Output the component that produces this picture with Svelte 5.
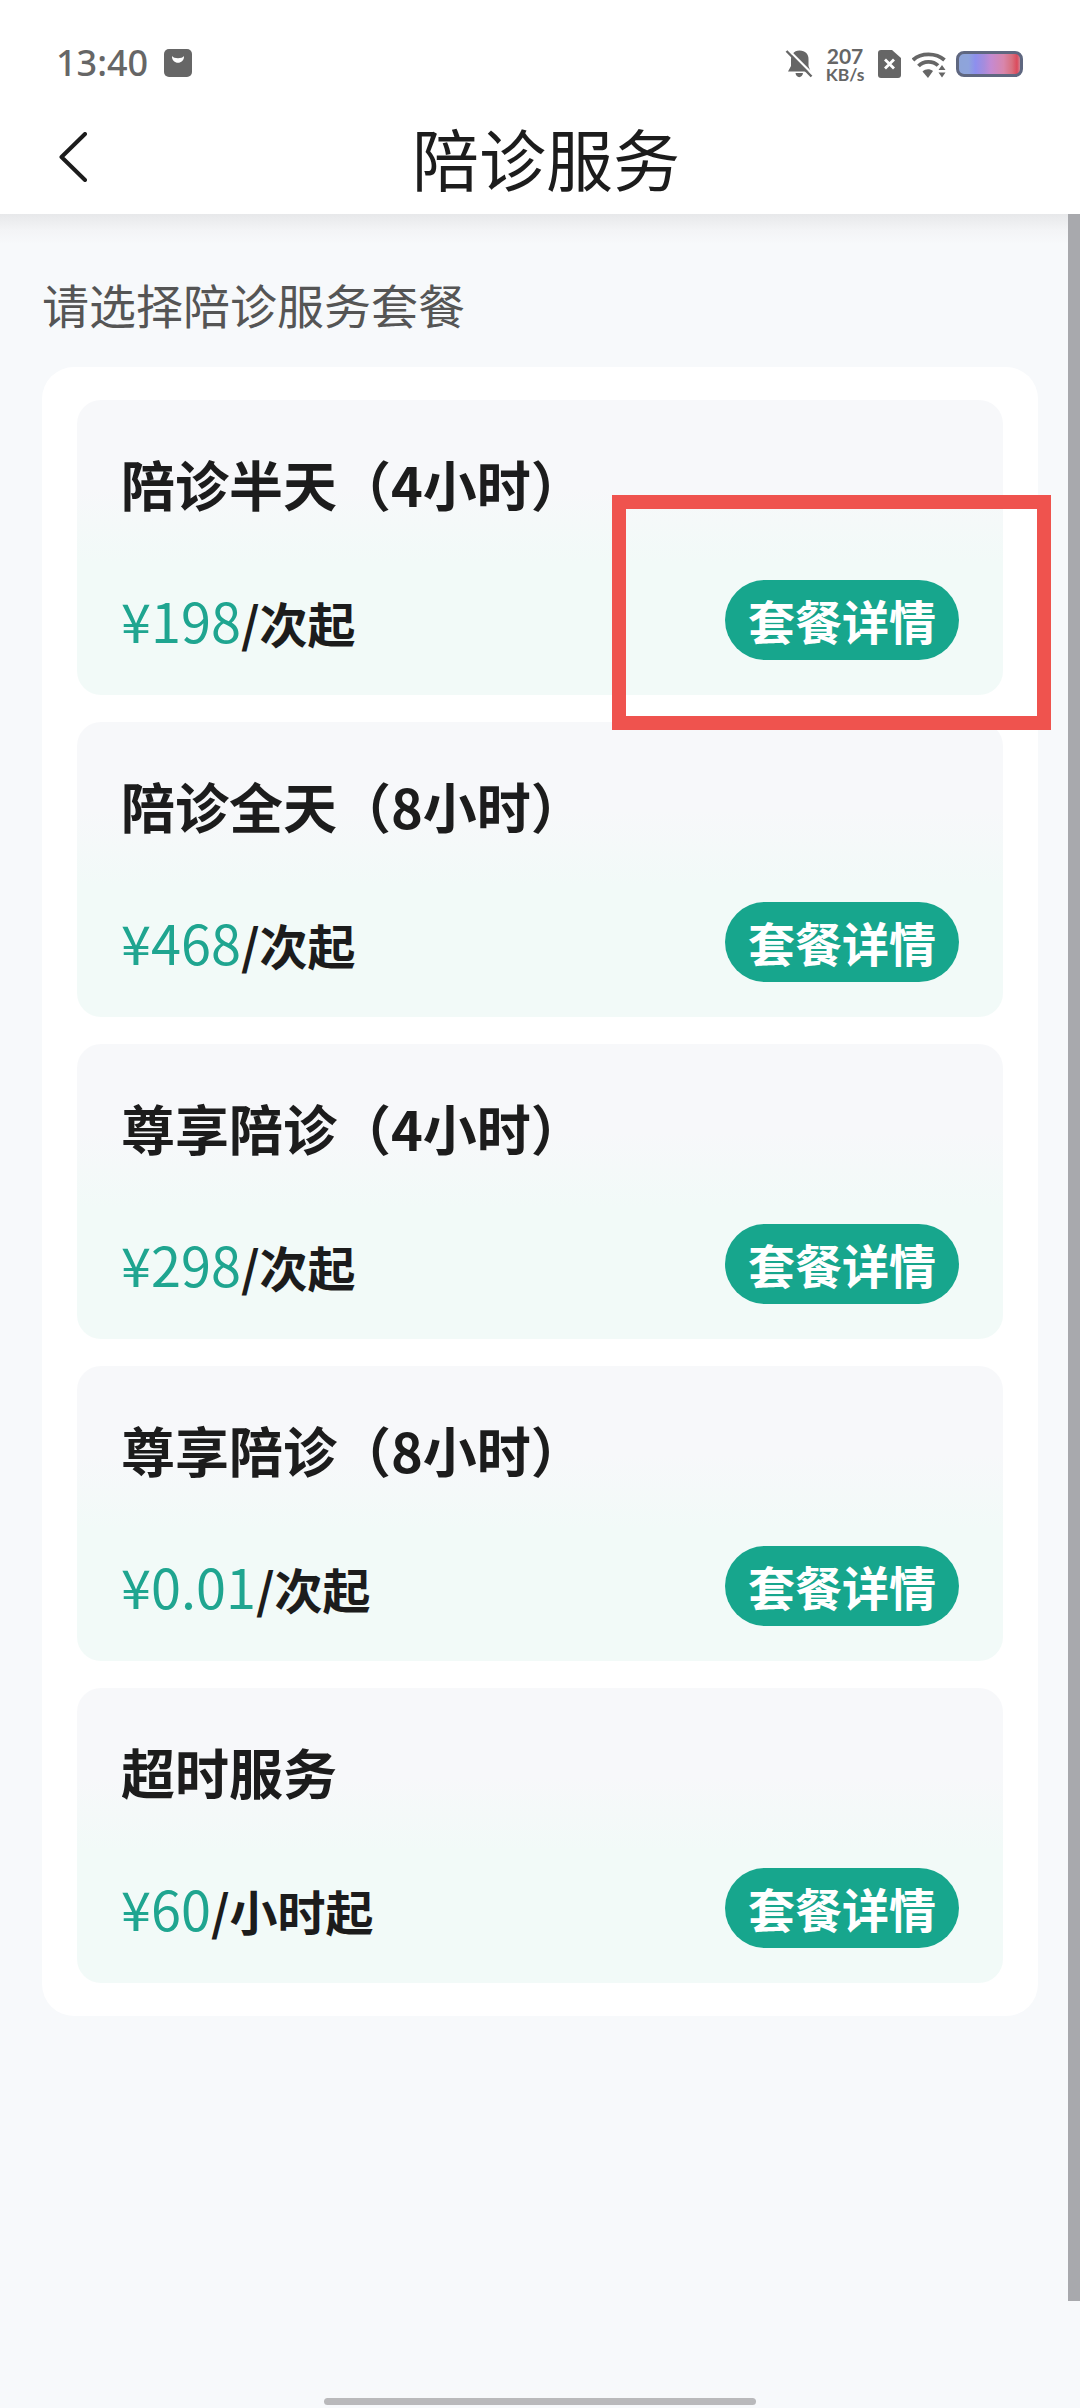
<script lang="ts">
    const plans = [
        { name: "陪诊半天（4小时）", price: "¥198", unit: "/次起" },
        { name: "陪诊全天（8小时）", price: "¥468", unit: "/次起" },
        { name: "尊享陪诊（4小时）", price: "¥298", unit: "/次起" },
        { name: "尊享陪诊（8小时）", price: "¥0.01", unit: "/次起" },
        { name: "超时服务", price: "¥60", unit: "/小时起" }
    ];
</script>

<div class="page">
    <header class="top">
        <div class="status">
            <div class="status-left">
                <span class="time">13:40</span>
                <svg class="bag" viewBox="0 0 28 28">
                    <rect width="28" height="28" rx="5" fill="#666" />
                    <path d="M8 7 C10 10 18 10 20 7 C20.5 16 7.5 16 8 7 Z" fill="#fff" />
                </svg>
            </div>
            <div class="status-right">
                <svg class="bell" viewBox="0 0 26 28">
                    <path d="M13.5 0.5 C7.5 0.5 5 5 5 10 L5 16 L2 21.5 L24.5 21.5 L22.5 16 L22.5 9 C22.5 4.5 19.5 0.5 13.5 0.5 Z M9.5 23 C10 28.5 16.5 28.5 17 23 Z" fill="#666" />
                    <path d="M1.5 -1 L27 24.5" stroke="#fff" stroke-width="2.4" />
                    <path d="M0.5 1 L25.5 26.5" stroke="#666" stroke-width="2.4" />
                </svg>
                <div class="speed">
                    <span class="speed-num">207</span>
                    <span class="speed-unit">KB/s</span>
                </div>
                <svg class="sim" viewBox="0 0 23 28">
                    <path d="M3 0 H14 L23 8 V25 Q23 28 20 28 H3 Q0 28 0 25 V3 Q0 0 3 0 Z" fill="#666" />
                    <path d="M7 9.5 L16 18.5 M16 9.5 L7 18.5" stroke="#fff" stroke-width="2.8" />
                </svg>
                <svg class="wifi" viewBox="0 0 34 27">
                    <path d="M1 9 C9 1.5 24 1.5 32.5 9" fill="none" stroke="#666" stroke-width="3.8" />
                    <path d="M6.5 15 C11.5 9.5 21 9.5 26 14.5" fill="none" stroke="#666" stroke-width="3.8" />
                    <path d="M10.5 20.5 C13.5 17.5 18 17.5 21 20 L16 27 Z" fill="#666" />
                    <path d="M30 14 L33.5 19 H26.5 Z M26.5 21.5 H33.5 L30 26.5 Z" fill="#666" />
                </svg>
                <svg class="battery" viewBox="0 0 67 26">
                    <defs>
                        <linearGradient id="charge" x1="0" x2="1" y1="0" y2="0">
                            <stop offset="0" stop-color="#8ea4d8" />
                            <stop offset="0.17" stop-color="#8ea4dc" />
                            <stop offset="0.28" stop-color="#8d8fee" />
                            <stop offset="0.42" stop-color="#a78cdc" />
                            <stop offset="0.52" stop-color="#c48ad2" />
                            <stop offset="0.72" stop-color="#d886ac" />
                            <stop offset="0.85" stop-color="#d8707f" />
                            <stop offset="0.93" stop-color="#dc4a5c" />
                            <stop offset="1" stop-color="#c9a0b0" />
                        </linearGradient>
                    </defs>
                    <rect x="1.5" y="1.5" width="64" height="23" rx="6.5" fill="url(#charge)" stroke="#5f6780" stroke-width="3" />
                </svg>
            </div>
        </div>
        <nav class="nav">
            <svg class="back" viewBox="0 0 28 50">
                <path d="M26 2 L2.5 25 L26 48" fill="none" stroke="#1c1c1c" stroke-width="4" stroke-linecap="round" stroke-linejoin="round" />
            </svg>
            <h1 class="title">陪诊服务</h1>
        </nav>
    </header>

    <main class="content">
        <div class="hint">请选择陪诊服务套餐</div>
        <section class="panel">
            {#each plans as plan}
                <article class="plan">
                    <div class="plan-name">{plan.name}</div>
                    <div class="plan-row">
                        <div class="plan-price"><span class="amount">{plan.price}</span><span class="unit">{plan.unit}</span></div>
                        <div class="detail-btn">套餐详情</div>
                    </div>
                </article>
            {/each}
        </section>
    </main>

    <div class="highlight"></div>
    <div class="scrollbar"></div>
    <div class="home-bar"></div>
</div>

<style>
    :global(body) {
        margin: 0;
        background: #f7f9fb;
    }

    .page {
        position: relative;
        width: 1080px;
        height: 2408px;
        overflow: hidden;
        background: #f7f9fb;
        font-family: "Noto Sans CJK SC", "Noto Sans", sans-serif;
        color: #1c1c1c;
    }

    .top {
        height: 214px;
        background: #fff;
        display: flex;
        flex-direction: column;
    }

    .status {
        height: 102px;
        padding: 46px 57px 0 56px;
        box-sizing: border-box;
        display: flex;
        justify-content: space-between;
        align-items: flex-start;
    }

    .status-left {
        display: flex;
        align-items: center;
        height: 34px;
        gap: 16px;
    }

    .time {
        font-family: "Noto Sans", sans-serif;
        font-size: 36px;
        font-weight: 500;
        line-height: 34px;
        color: #666;
    }

    .bag {
        width: 28px;
        height: 28px;
    }

    .status-right {
        display: flex;
        align-items: center;
        height: 36px;
    }

    .bell {
        width: 26px;
        height: 28px;
        margin-right: 13px;
        overflow: visible;
    }

    .speed {
        width: 40px;
        margin-right: 13px;
        display: flex;
        flex-direction: column;
        align-items: center;
        font-family: "Lato", sans-serif;
        font-weight: 700;
        color: #666;
    }

    .speed-num {
        font-size: 21px;
        line-height: 20px;
    }

    .speed-unit {
        font-size: 17.5px;
        line-height: 17px;
    }

    .sim {
        width: 23px;
        height: 28px;
        margin-right: 11px;
    }

    .wifi {
        width: 34px;
        height: 27px;
        margin-right: 10px;
    }

    .battery {
        width: 67px;
        height: 26px;
    }

    .nav {
        flex: 1;
        display: flex;
        align-items: center;
        justify-content: center;
        position: relative;
        padding-left: 12px;
    }

    .back {
        position: absolute;
        left: 59px;
        top: 30px;
        width: 28px;
        height: 50px;
    }

    .title {
        margin: -2px 0 0;
        font-size: 67px;
        font-weight: 400;
        line-height: 90px;
        color: #1c1c1c;
    }

    .content {
        padding: 0 42px;
        background: linear-gradient(#e7e8ea 0, #f3f4f6 16px, #f7f9fb 30px) no-repeat;
        background-size: 100% 40px;
    }

    .hint {
        height: 153px;
        padding-top: 25px;
        box-sizing: border-box;
        display: flex;
        align-items: center;
        font-size: 47px;
        color: #555;
    }

    .panel {
        width: 996px;
        box-sizing: border-box;
        background: #fff;
        border-radius: 32px;
        padding: 33px 35px;
        display: flex;
        flex-direction: column;
        gap: 27px;
    }

    .plan {
        height: 295px;
        box-sizing: border-box;
        padding: 49px 44px 0 44px;
        border-radius: 24px;
        background: linear-gradient(#f7f8fa 0, #f7f8fa 30%, #f2faf8 55%, #f2faf8 100%);
    }

    .plan-name {
        font-size: 54px;
        line-height: 70px;
        font-weight: 700;
        color: #1c1c1c;
    }

    .plan-row {
        margin-top: 61px;
        height: 80px;
        display: flex;
        align-items: center;
        justify-content: space-between;
    }

    .plan-price {
        padding-top: 16px;
        line-height: 70px;
        white-space: nowrap;
    }

    .amount {
        font-size: 54px;
        color: #1fa590;
    }

    .unit {
        font-size: 48px;
        font-weight: 700;
        color: #1c1c1c;
    }

    .detail-btn {
        width: 234px;
        height: 80px;
        border-radius: 40px;
        background: #17a68d;
        color: #fff;
        font-size: 47px;
        font-weight: 700;
        line-height: 80px;
        text-align: center;
    }

    .highlight {
        position: absolute;
        left: 612px;
        top: 495px;
        width: 439px;
        height: 235px;
        box-sizing: border-box;
        border: 14px solid #ef534e;
    }

    .scrollbar {
        position: absolute;
        right: 0;
        top: 214px;
        width: 12px;
        height: 2087px;
        background: #a8a9ad;
    }

    .home-bar {
        position: absolute;
        left: 324px;
        top: 2398px;
        width: 432px;
        height: 7px;
        border-radius: 4px;
        background: #b9b9bb;
    }
</style>
